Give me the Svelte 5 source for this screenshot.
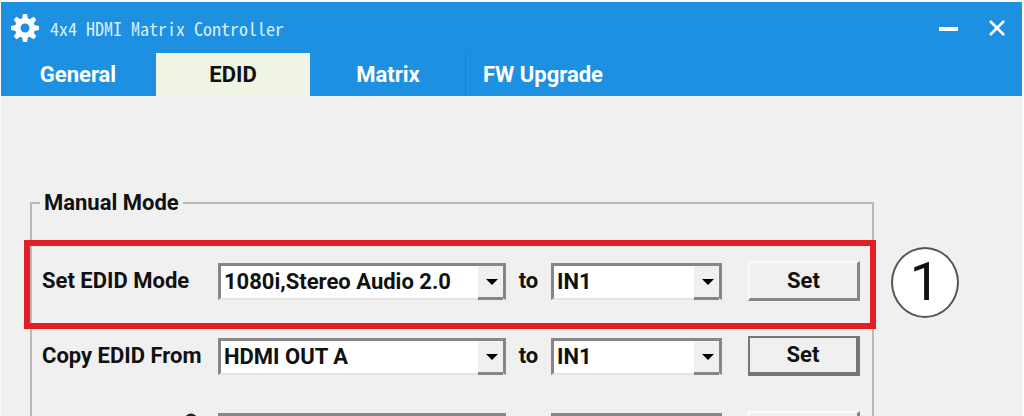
<script>
	let tabs = ["General", "EDID", "Matrix", "FW Upgrade"];
	let active = $state("EDID");

	const inputs = ["IN1", "IN2", "IN3", "IN4"];
	let rows = $state([
		{id: "mode", label: "Set EDID Mode", options: ["1080i,Stereo Audio 2.0", "1080p,Stereo Audio 2.0"], value: "1080i,Stereo Audio 2.0", to: "IN1", step: 1},
		{id: "copy", label: "Copy EDID From", options: ["HDMI OUT A", "HDMI OUT B"], value: "HDMI OUT A", to: "IN1", focused: true},
	]);
</script>

<div class="window">
	<header>
		<div class="titlebar">
			<svg class="gear" viewBox="0 0 28 30" aria-hidden="true">
				<g fill="#fff">
					{#each [0, 45, 90, 135] as angle}
						<path d="M11 6 L12 1 H16 L17 6 V24 L16 29 H12 L11 24 Z" transform="rotate({angle} 14 15)" />
					{/each}
					<circle cx="14" cy="15" r="10" />
				</g>
				<circle cx="14" cy="15" r="4.5" fill="#1e90e2" />
			</svg>
			<h1>4x4 HDMI Matrix Controller</h1>
			<button class="win-btn" aria-label="Minimize">
				<svg viewBox="0 0 20 20"><path d="M0 11H19" stroke="#fff" stroke-width="4" /></svg>
			</button>
			<button class="win-btn" aria-label="Close">
				<svg viewBox="0 0 20 20"><path d="M2 3L16 17M16 3L2 17" stroke="#fff" stroke-width="2.5" /></svg>
			</button>
		</div>
		<nav>
			{#each tabs as tab}
				<button class="tab" class:active={tab == active} onclick={() => active = tab}>{tab}</button>
			{/each}
		</nav>
	</header>

	<main>
		<fieldset>
			<legend>Manual Mode</legend>
			{#each rows as row}
				<div class="row" class:marked={row.step}>
					<label for={row.id}>{row.label}</label>
					<div class="combo">
						<select id={row.id} bind:value={row.value}>
							{#each row.options as o}<option>{o}</option>{/each}
						</select>
					</div>
					<label class="to" for="{row.id}-to">to</label>
					<div class="combo">
						<select id="{row.id}-to" bind:value={row.to}>
							{#each inputs as o}<option>{o}</option>{/each}
						</select>
					</div>
					<button class="set" class:focused={row.focused}>Set</button>
					{#if row.step}<span class="step">{row.step}</span>{/if}
				</div>
			{/each}
			<div class="row">
				<svg class="hint" viewBox="0 0 14 36" aria-hidden="true">
					<circle cx="7" cy="7" r="5" fill="none" stroke="#222" stroke-width="3" />
				</svg>
				<div class="combo"><select aria-label="Source"></select></div>
				<span></span>
				<div class="combo"><select aria-label="Target"></select></div>
				<button class="set" aria-label="Apply"></button>
			</div>
		</fieldset>
	</main>
</div>

<style>
:global(body) {
  background: #f0f0f0;
  overflow: hidden;
}
.window {
  height: 100vh;
  overflow: hidden;
  box-sizing: border-box;
  border: 0 solid #fafafa;
  border-width: 2px 2px 0 1px;
  font: bold 22px/26px Roboto, "Liberation Sans", Arial, sans-serif;
  color: #111;
}
button, select {
  font: inherit;
  color: inherit;
}
header {
  background: #1e90e2;
}
.titlebar {
  display: flex;
  align-items: center;
  height: 51px;
  padding: 0 14px 0 10px;
}
.gear {
  width: 28px;
  height: 30px;
}
h1 {
  flex: 1;
  margin: 0 0 0 11px;
  color: #d8efff;
  font: 400 18px/24px "Noto Sans CJK SC", "Liberation Mono", monospace;
  font-feature-settings: "hwid";
}
.win-btn {
  width: 20px;
  height: 20px;
  margin-left: 29px;
  padding: 0;
  border: 0;
  background: none;
}
.win-btn svg {
  display: block;
}
nav {
  display: flex;
}
.tab {
  width: 155px;
  height: 43px;
  padding: 0;
  border: 0;
  border-right: 1px solid #1e90e2;
  background: none;
  color: #fff;
}
.tab:nth-child(3) {
  border-right-color: #1680d4;
}
.tab.active {
  background: #f0f4e4;
  color: #111;
}
main {
  padding: 94px 148px 0 29px;
}
fieldset {
  min-width: 0;
  margin: 0;
  padding: 45px 12px 60px 10px;
  border: 2px solid #b8b8b8;
}
legend {
  margin-left: -2px;
  padding: 0 4px;
}
.row {
  position: relative;
  display: grid;
  grid-template-columns: 176px minmax(0, 288fr) 45px minmax(0, 171fr) 26px 112px;
  align-items: center;
  height: 40px;
  margin-bottom: 35px;
}
.to {
  text-align: center;
}
.combo {
  position: relative;
}
.combo select {
  display: block;
  appearance: none;
  width: 100%;
  height: 37px;
  padding: 0 30px 0 3px;
  border: 3px solid #868686;
  border-bottom: 2px solid #e4e4e4;
  border-radius: 0;
  background: #fff;
}
.combo::before {
  content: "";
  position: absolute;
  right: 3px;
  top: 3px;
  bottom: 0;
  width: 25px;
  box-sizing: border-box;
  border-bottom: 3px solid #868686;
  background: #f0f0f0;
  pointer-events: none;
}
.combo::after {
  content: "";
  position: absolute;
  right: 8px;
  top: 16px;
  border: 6px solid transparent;
  border-top-color: #000;
  border-bottom: 0;
  pointer-events: none;
}
.set {
  grid-column: 6;
  height: 40px;
  padding: 0;
  border: 2px solid #fafafa;
  border-right: 3px solid #868686;
  border-bottom: 3px solid #868686;
  background: #f0f0f0;
}
.set.focused {
  border-color: #777;
  border-width: 2px 4px 4px 2px;
}
.marked::before {
  content: "";
  position: absolute;
  inset: -21px -16px -28px -18px;
  border: 6px solid #e41e26;
  pointer-events: none;
}
.hint {
  justify-self: end;
  width: 14px;
  height: 36px;
  margin-right: 20px;
}
.step {
  position: absolute;
  left: calc(100% + 31px);
  top: -14px;
  width: 68px;
  height: 71px;
  box-sizing: border-box;
  border: 2px solid #555;
  border-radius: 50%;
  background: #fff;
  font: 54px/66px Roboto, "Liberation Sans", Arial, sans-serif;
  text-align: center;
}
</style>
